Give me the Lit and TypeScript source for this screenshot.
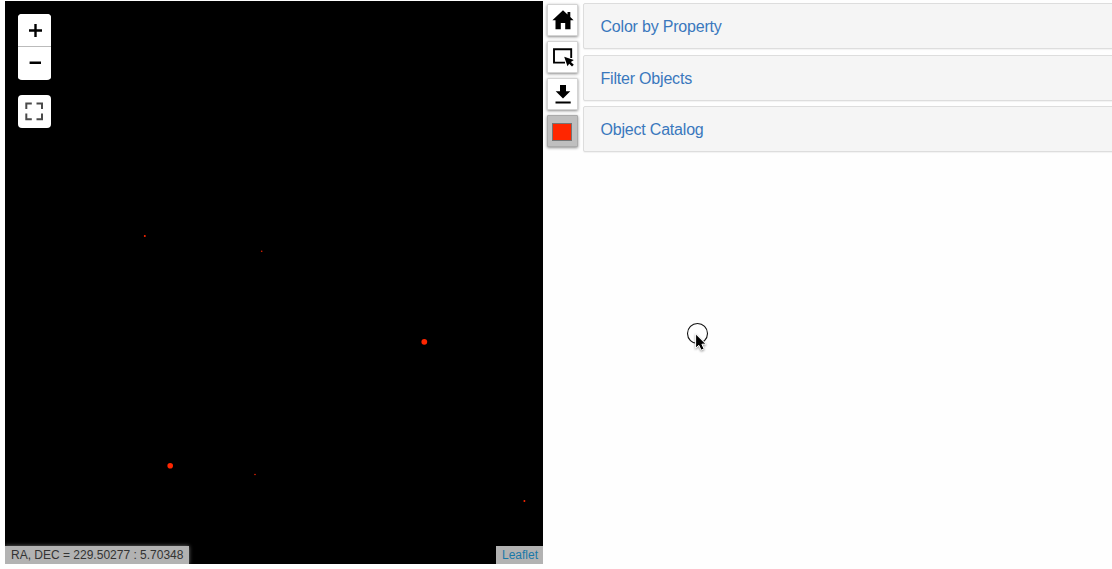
import { LitElement, html, css, svg } from "lit";
import { customElement, state } from "lit/decorators.js";

const points = [
  { x: 139.8, y: 235, r: 1, o: 1 },
  { x: 256.7, y: 250.2, r: 0.8, o: 0.9 },
  { x: 419.3, y: 340.8, r: 2.9, o: 1 },
  { x: 165.2, y: 464.8, r: 2.8, o: 1 },
  { x: 250, y: 473.5, r: 0.8, o: 0.9 },
  { x: 519.4, y: 500, r: 0.95, o: 1 },
];

@customElement("sky-map")
class SkyMap extends LitElement {
  static styles = css`
    :host { display: block; position: relative; width: 538px; height: 563px; background: #000; overflow: hidden; }
    .sky { display: block; width: 538px; height: 563px; }
    .controls { position: absolute; left: 13px; top: 13px; display: flex; flex-direction: column; gap: 15px; }
    .bar { width: 33px; border-radius: 4px; background: #fff; overflow: hidden; }
    .btn { display: block; width: 33px; height: 33px; padding: 0; border: 0; background: #fff; }
    .zoom .btn:first-child { height: 32px; }
    .btn + .btn { border-top: 1px solid #bbb; }
    .btn svg { display: block; width: 33px; height: 33px; }
    .zoom { height: 66px; }
    .label { position: absolute; bottom: 0; height: 18px; line-height: 18px; background: #b2b2b2; font-size: 12px; color: #333; white-space: nowrap; }
    .coords { left: 0; width: 178px; padding-left: 6px; box-shadow: 0 0 4px #777; }
    .credit { right: 0; width: 41px; padding-left: 6px; color: #1878a8; }
  `;
  render() {
    return html`
      <svg class="sky" viewBox="0 0 538 563">
        ${points.map((p) => svg`<circle cx=${p.x} cy=${p.y} r=${p.r} opacity=${p.o} fill="#ff2600"/>`)}
      </svg>
      <div class="controls">
        <div class="bar zoom">
          <button class="btn" aria-label="Zoom in"><svg viewBox="0 0 33 33"><path d="M11 16.5H24M17.5 10V23" stroke="#000" stroke-width="2.4"/></svg></button>
          <button class="btn" aria-label="Zoom out"><svg viewBox="0 0 33 33"><path d="M11.6 15.8H23" stroke="#000" stroke-width="2.6"/></svg></button>
        </div>
        <div class="bar">
          <button class="btn" aria-label="Full screen"><svg viewBox="0 0 33 33"><path d="M8.3 14V8.6H13.8M18.5 8.6H24V14M24 18.5V24.2H18.5M13.8 24.2H8.3V18.5" fill="none" stroke="#4a4a4a" stroke-width="2"/></svg></button>
        </div>
      </div>
      <div class="label coords">RA, DEC = 229.50277 : 5.70348</div>
      <div class="label credit">Leaflet</div>
    `;
  }
}

@customElement("tool-strip")
class ToolStrip extends LitElement {
  static styles = css`
    :host { display: flex; flex-direction: column; gap: 5.2px; width: 31.5px; }
    .tool { display: block; box-sizing: border-box; width: 31.5px; height: 32px; padding: 0; border: 1px solid #d4d4d4; border-radius: 1px; background: #fff; box-shadow: 0 1px 3px rgba(0, 0, 0, 0.45); }
    .tool svg { display: block; width: 30px; height: 30px; }
    .active { background: #bfbfbf; border-color: #aaa; }
  `;
  render() {
    return html`
      <button class="tool" aria-label="Home"><svg viewBox="0 0 30 30"><path d="M15 5.2L19.5 9.4V7H22.3V12L25.6 15.2H22.5V24.2H17.2V18H12.8V24.2H7.5V15.2H4.4Z"/></svg></button>
      <button class="tool" aria-label="Select area"><svg viewBox="0 0 30 30"><path d="M17 20.6H6V7.2H23.2V16" fill="none" stroke="#000" stroke-width="1.9"/><path d="M16.2 14.8L25.8 18.1L22.9 19.9L25.8 22.8L24 24.5L21.2 21.7L19.5 24.3Z"/></svg></button>
      <button class="tool" aria-label="Download"><svg viewBox="0 0 30 30"><path d="M12 6H18V12.2H22.3L15 19.6L7.7 12.2H12ZM7.5 22.5H22.7V24.5H7.5Z"/></svg></button>
      <button class="tool active" aria-label="Object color"><svg viewBox="0 0 30 30"><rect x="4.5" y="7.5" width="19" height="17" fill="#ff2600" stroke="#757575"/></svg></button>
    `;
  }
}

@customElement("app-root")
class AppRoot extends LitElement {
  @state() private panels = ["Color by Property", "Filter Objects", "Object Catalog"];

  static styles = css`
    :host { display: block; width: 1112px; height: 569px; overflow: hidden; position: relative; background: #fefefe; font-family: "Liberation Sans", Arial, sans-serif; }
    .layout { display: flex; box-sizing: border-box; height: 569px; padding: 1px 0 0 5px; }
    .map { flex: none; }
    .tools { flex: none; margin: 2.6px 5px 0 3.5px; }
    .panels { flex: none; display: flex; flex-direction: column; gap: 5.5px; width: 540px; padding-top: 2px; }
    .panel { box-sizing: border-box; height: 46px; border: 1px solid #ddd; border-radius: 2px; background: #f5f5f5; box-shadow: 0 1px 1px rgba(0, 0, 0, 0.05); padding-left: 16.5px; line-height: 46px; font-size: 16px; letter-spacing: -0.2px; color: #3a78bd; }
    .pointer { position: absolute; left: 684px; top: 320px; width: 28px; height: 34px; }
  `;
  render() {
    return html`
      <div class="layout">
        <sky-map class="map"></sky-map>
        <tool-strip class="tools"></tool-strip>
        <div class="panels">${this.panels.map((p) => html`<div class="panel">${p}</div>`)}</div>
      </div>
      <svg class="pointer" viewBox="0 0 28 34">
        <circle cx="13.5" cy="13.5" r="10" fill="#fff" stroke="#111" stroke-width="1.1"/>
        <path d="M11.6 13.8V28.2L14.8 25.3L17.1 30.2L20.1 28.9L17.9 24.2H22Z" fill="#000" stroke="#fff" stroke-width="1" style="filter: drop-shadow(0 1px 1px rgba(0,0,0,.4))"/>
      </svg>
    `;
  }
}
